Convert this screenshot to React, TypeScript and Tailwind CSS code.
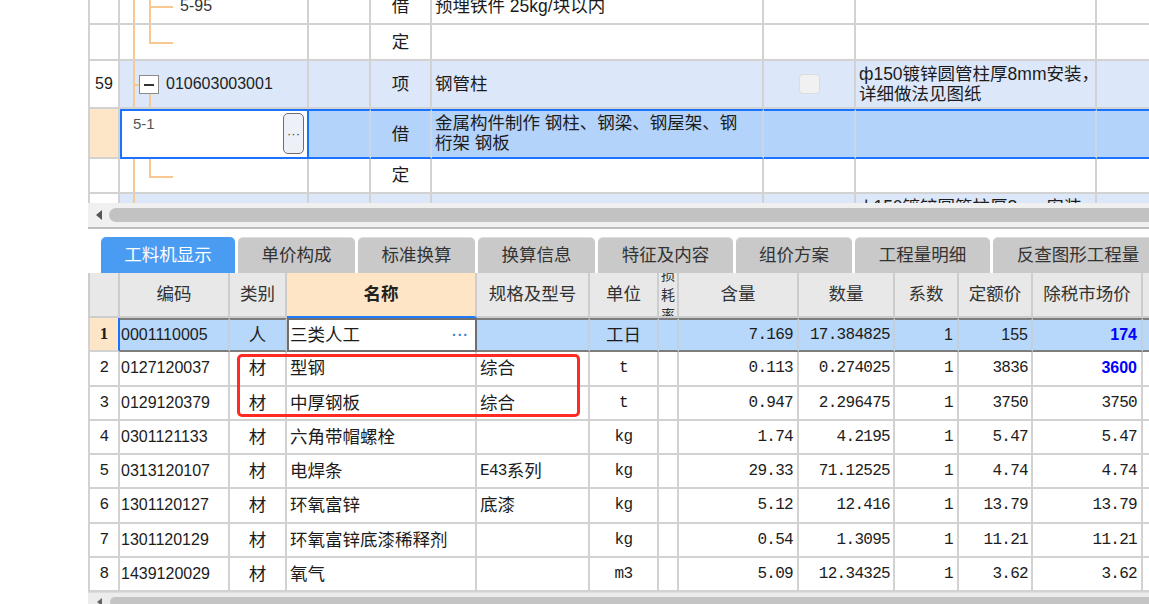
import React from 'react';

// 字体：拉丁字符用 Liberation，中文回落到 Noto CJK
const SANS = "font-['Liberation_Sans','Noto_Sans_CJK_SC',sans-serif]";
const MONO = "font-['Liberation_Mono','Noto_Sans_CJK_SC',monospace]";
const NUM = `text-[16px] tracking-[-0.7px] ${MONO}`;

const line = 'border-[#d2d2d2]';
const treeLine = 'bg-[#f8c890]';

type TopRowData = {
  h: string;
  rn?: string;
  tree: 'child' | 'last' | 'parent' | 'editor' | 'plain';
  code?: string;
  type?: string;
  desc?: React.ReactNode;
  feat?: React.ReactNode;
  check?: boolean;
  tone: 'white' | 'item' | 'selected';
};

const topRows: TopRowData[] = [
  { h: 'h-[36px]', tree: 'child', code: '5-95', type: '借', desc: '预埋铁件 25kg/块以内', tone: 'white' },
  { h: 'h-[36px]', tree: 'last', type: '定', tone: 'white' },
  {
    h: 'h-[48px]',
    rn: '59',
    tree: 'parent',
    code: '010603003001',
    type: '项',
    desc: '钢管柱',
    check: true,
    feat: (
      <>
        ф150镀锌圆管柱厚8mm安装，
        <br />
        详细做法见图纸
      </>
    ),
    tone: 'item',
  },
  {
    h: 'h-[50px]',
    tree: 'editor',
    code: '5-1',
    type: '借',
    desc: (
      <>
        金属构件制作 钢柱、钢梁、钢屋架、钢
        <br />
        桁架 钢板
      </>
    ),
    tone: 'selected',
  },
  { h: 'h-[35px]', tree: 'last', type: '定', tone: 'white' },
  {
    h: 'h-[48px]',
    rn: '60',
    tree: 'plain',
    type: '项',
    desc: '钢管柱',
    feat: (
      <>
        ф150镀锌圆管柱厚8mm安装，
        <br />
        详细做法见图纸
      </>
    ),
    tone: 'item',
  },
];

/**
 * 树形列：橙色连接线 + 折叠按钮 / 编辑框
 */
function TreeCell({ r }: { r: TopRowData }) {
  if (r.tree === 'editor') {
    return (
      <div className="relative w-[189px] shrink-0 border-2 border-[#1a72ff] bg-white">
        <span className="absolute left-[11px] top-[2px] text-[15px] text-[#555]">{r.code}</span>
        <span className="absolute left-[161px] top-[2px] flex h-[41px] w-[21px] items-center justify-center rounded-[5px] border-[1.5px] border-[#6e6e6e] bg-[#edf1f7] text-[13px] leading-none text-[#444]">
          ···
        </span>
      </div>
    );
  }
  const bg = r.tone === 'item' ? 'bg-[#dce8fa]' : 'bg-white';
  return (
    <div className={`relative w-[189px] shrink-0 border-r-2 border-b-2 ${line} ${bg}`}>
      <span className={`absolute left-[13px] top-0 bottom-0 w-[2px] ${treeLine}`} />
      {r.tree === 'child' && (
        <>
          <span className={`absolute left-[29px] top-0 bottom-0 w-[2px] ${treeLine}`} />
          <span className={`absolute left-[29px] top-1/2 h-[2px] w-[24px] ${treeLine}`} />
          <span className="absolute left-[60px] top-1/2 -translate-y-1/2 text-[16px] text-[#333]">{r.code}</span>
        </>
      )}
      {r.tree === 'last' && (
        <>
          <span className={`absolute left-[29px] top-0 h-1/2 w-[2px] ${treeLine}`} />
          <span className={`absolute left-[29px] top-1/2 h-[2px] w-[24px] ${treeLine}`} />
        </>
      )}
      {r.tree === 'parent' && (
        <>
          <span className={`absolute left-[13px] top-[23px] h-[2px] w-[7px] ${treeLine}`} />
          <span className={`absolute left-[29px] top-[33px] bottom-0 w-[2px] ${treeLine}`} />
          <span className="absolute left-[19px] top-[14px] flex h-[19px] w-[20px] items-center justify-center border border-[#8c8c8c] bg-white">
            <span className="h-[2px] w-[10px] bg-[#333]" />
          </span>
          <span className="absolute left-[46px] top-1/2 -translate-y-1/2 text-[16px] text-[#222]">{r.code}</span>
        </>
      )}
    </div>
  );
}

function TopRow({ r }: { r: TopRowData }) {
  const sel = r.tone === 'selected';
  const bg = r.tone === 'item' ? 'bg-[#dce8fa]' : sel ? 'bg-[#b3d3fa]' : 'bg-white';
  const edge = sel
    ? 'border-r-2 border-r-[#c9d6e6] border-t-2 border-t-[#1a72ff] border-b-2 border-b-[#1a72ff]'
    : `border-r-2 border-b-2 ${line}`;
  return (
    <div className={`flex ${r.h}`}>
      <div
        className={`flex w-[32px] shrink-0 items-center justify-center border-l-2 border-r-2 border-b-2 ${line} ${
          sel ? 'bg-[#fde6c8]' : 'bg-white'
        } text-[16px] text-[#222]`}
      >
        {r.rn}
      </div>
      <TreeCell r={r} />
      <div className={`w-[62px] shrink-0 ${edge} ${bg}`} />
      <div className={`flex w-[61px] shrink-0 items-center justify-center ${edge} ${bg} text-[17.5px]`}>{r.type}</div>
      <div
        className={`flex w-[332px] shrink-0 ${sel ? 'items-start pt-[2px]' : 'items-center'} ${edge} ${bg} pl-[3px] text-[17.5px] leading-[20px] whitespace-nowrap`}
      >
        <div>{r.desc}</div>
      </div>
      <div className={`flex w-[92px] shrink-0 items-center justify-center ${edge} ${bg}`}>
        {r.check && <span className="h-[20px] w-[21px] rounded-[4px] border border-[#dcdcdc] bg-[#f1f1f1]" />}
      </div>
      <div className={`flex w-[241px] shrink-0 items-center ${edge} ${bg} pl-[3px] text-[17.5px] leading-[20px] whitespace-nowrap`}>
        <div>{r.feat}</div>
      </div>
      <div className={`w-[80px] shrink-0 ${edge} ${bg}`} />
    </div>
  );
}

function TopGrid() {
  return (
    <div className="h-[203px] shrink-0 overflow-hidden">
      <div className="mt-[-11px]">
        {topRows.map((r, i) => (
          <TopRow key={i} r={r} />
        ))}
      </div>
    </div>
  );
}

function ScrollStrip() {
  return (
    <div className="flex h-[24px] shrink-0 items-center bg-[#f0f0f0]">
      <svg className="ml-[8px] h-[10px] w-[6px]" viewBox="0 0 6 10">
        <path d="M6 0 L0 5 L6 10 Z" fill="#555" />
      </svg>
      <div className="ml-[7px] h-[14px] flex-1 rounded-l-full bg-[#c2c2c2]" />
    </div>
  );
}

const tabs = [
  { label: '工料机显示', w: 'w-[134px]', active: true },
  { label: '单价构成', w: 'w-[117px]' },
  { label: '标准换算', w: 'w-[117px]' },
  { label: '换算信息', w: 'w-[117px]' },
  { label: '特征及内容', w: 'w-[135px]' },
  { label: '组价方案', w: 'w-[116px]' },
  { label: '工程量明细', w: 'w-[135px]' },
  { label: '反查图形工程量', w: 'w-[170px]' },
];

function Tabs() {
  return (
    <div className="flex h-[36px] shrink-0 gap-[3px] pl-[13px]">
      {tabs.map((t) => (
        <div
          key={t.label}
          className={`flex ${t.w} shrink-0 items-center justify-center rounded-t-[5px] text-[17.5px] ${
            t.active ? 'bg-[#4a9cf2] text-white' : 'border-t border-[#dedede] bg-[#c9c9c9] text-[#333]'
          }`}
        >
          {t.label}
        </div>
      ))}
    </div>
  );
}

type Mat = {
  code: string;
  type: string;
  name: string;
  spec: string;
  unit: string;
  qty: string;
  amount: string;
  price: string;
  market: string;
  marketBlue?: boolean;
};

const mats: Mat[] = [
  { code: '0127120037', type: '材', name: '型钢', spec: '综合', unit: 't', qty: '0.113', amount: '0.274025', price: '3836', market: '3600', marketBlue: true },
  { code: '0129120379', type: '材', name: '中厚钢板', spec: '综合', unit: 't', qty: '0.947', amount: '2.296475', price: '3750', market: '3750' },
  { code: '0301121133', type: '材', name: '六角带帽螺栓', spec: '', unit: 'kg', qty: '1.74', amount: '4.2195', price: '5.47', market: '5.47' },
  { code: '0313120107', type: '材', name: '电焊条', spec: 'E43系列', unit: 'kg', qty: '29.33', amount: '71.12525', price: '4.74', market: '4.74' },
  { code: '1301120127', type: '材', name: '环氧富锌', spec: '底漆', unit: 'kg', qty: '5.12', amount: '12.416', price: '13.79', market: '13.79' },
  { code: '1301120129', type: '材', name: '环氧富锌底漆稀释剂', spec: '', unit: 'kg', qty: '0.54', amount: '1.3095', price: '11.21', market: '11.21' },
  { code: '1439120029', type: '材', name: '氧气', spec: '', unit: 'm3', qty: '5.09', amount: '12.34325', price: '3.62', market: '3.62' },
];

const hc = `flex shrink-0 items-center justify-center border-r-2 border-b-2 border-[#cdcdcd] bg-[#e8e8e8] text-[17.5px] text-[#333]`;

function Header() {
  return (
    <div className="flex h-[45px] shrink-0">
      <div className={`${hc} w-[32px] border-l-2`} />
      <div className={`${hc} w-[110px]`}>编码</div>
      <div className={`${hc} w-[57px]`}>类别</div>
      <div className="flex w-[190px] shrink-0 items-center justify-center border-r-2 border-r-[#cdcdcd] border-b-2 border-b-[#1f7bff] bg-[#fde5c6] text-[17.5px] font-bold text-[#222]">
        名称
      </div>
      <div className={`${hc} w-[113px]`}>规格及型号</div>
      <div className={`${hc} w-[69px]`}>单位</div>
      <div className={`${hc} w-[20px] overflow-hidden`}>
        <div className="flex h-[43px] flex-col items-center justify-center overflow-hidden text-[14px] leading-[20px]">
          <span className="shrink-0">损</span>
          <span className="shrink-0">耗</span>
          <span className="shrink-0">率</span>
        </div>
      </div>
      <div className={`${hc} w-[120px]`}>含量</div>
      <div className={`${hc} w-[96px]`}>数量</div>
      <div className={`${hc} w-[64px]`}>系数</div>
      <div className={`${hc} w-[74px]`}>定额价</div>
      <div className={`${hc} w-[110px]`}>除税市场价</div>
      <div className={`${hc} w-[60px]`} />
    </div>
  );
}

const r1 = 'shrink-0 border-t-2 border-b-2 border-r-2 border-t-[#7d7d7d] border-b-[#7d7d7d] border-r-[#c4cfdc] bg-[#b7d7fb] flex items-center';

function FirstRow() {
  return (
    <div className="flex h-[34.25px] shrink-0">
      <div className="flex w-[32px] shrink-0 items-center justify-center border-l-2 border-b-2 border-r-2 border-l-[#d2d2d2] border-b-[#d2d2d2] border-r-[#1a72ff] bg-[#fde6c8] font-['Liberation_Serif',serif] text-[17px] font-bold">
        1
      </div>
      <div className={`${r1} w-[110px] pl-[1px] text-[16px]`}>0001110005</div>
      <div className={`${r1} w-[57px] justify-center text-[17.5px]`}>人</div>
      <div className="flex w-[190px] shrink-0 items-center justify-between border-2 border-[#6f6f6f] bg-white pl-[1px] pr-[6px] text-[17.5px]">
        <span>三类人工</span>
        <span className="text-[14px] font-bold tracking-[1px] text-[#3b7fd6]">···</span>
      </div>
      <div className={`${r1} w-[113px]`} />
      <div className={`${r1} w-[69px] justify-center text-[17.5px]`}>工日</div>
      <div className={`${r1} w-[20px]`} />
      <div className={`${r1} w-[120px] justify-end pr-[4px] ${NUM}`}>7.169</div>
      <div className={`${r1} w-[96px] justify-end pr-[3px] ${NUM}`}>17.384825</div>
      <div className={`${r1} w-[64px] justify-end pr-[4px] text-[16px]`}>1</div>
      <div className={`${r1} w-[74px] justify-end pr-[3px] text-[16px]`}>155</div>
      <div className={`${r1} w-[110px] justify-end pr-[4px] text-[16px] font-bold text-[#0000ff]`}>174</div>
      <div className={`${r1} w-[60px]`} />
    </div>
  );
}

const dc = `flex shrink-0 items-center border-r-2 border-b-2 ${line} bg-white`;

function MatRow({ m, n }: { m: Mat; n: number }) {
  return (
    <div className="flex h-[34.25px] shrink-0">
      <div className={`${dc} w-[32px] justify-center border-l-2 ${NUM}`}>{n}</div>
      <div className={`${dc} w-[110px] pl-[1px] text-[16px]`}>{m.code}</div>
      <div className={`${dc} w-[57px] justify-center text-[17.5px]`}>{m.type}</div>
      <div className={`${dc} w-[190px] pl-[3px] text-[17.5px] whitespace-nowrap`}>{m.name}</div>
      <div className={`${dc} w-[113px] pl-[3px] text-[17.5px] whitespace-nowrap`}>
        {m.spec === 'E43系列' ? (
          <>
            <span className={NUM}>E43</span>系列
          </>
        ) : (
          m.spec
        )}
      </div>
      <div className={`${dc} w-[69px] justify-center ${NUM}`}>{m.unit}</div>
      <div className={`${dc} w-[20px]`} />
      <div className={`${dc} w-[120px] justify-end pr-[4px] ${NUM}`}>{m.qty}</div>
      <div className={`${dc} w-[96px] justify-end pr-[3px] ${NUM}`}>{m.amount}</div>
      <div className={`${dc} w-[64px] justify-end pr-[4px] ${NUM}`}>1</div>
      <div className={`${dc} w-[74px] justify-end pr-[3px] ${NUM}`}>{m.price}</div>
      <div
        className={`${dc} w-[110px] justify-end pr-[4px] ${
          m.marketBlue ? 'text-[16px] font-bold text-[#0000ff]' : NUM
        }`}
      >
        {m.market}
      </div>
      <div className={`${dc} w-[60px]`} />
    </div>
  );
}

function BottomScroll() {
  return (
    <div className="flex h-[12px] shrink-0 items-start border-t border-[#dcdcdc] bg-[#ececec] pt-[4px]">
      <svg className="ml-[9px] mt-[1px] h-[8px] w-[5px]" viewBox="0 0 5 8">
        <path d="M5 0 L0 4 L5 8 Z" fill="#666" />
      </svg>
      <div className="ml-[8px] h-[10px] flex-1 rounded-l-full bg-[#c4c4c4]" />
    </div>
  );
}

export default function App() {
  return (
    <div className={`relative flex h-[604px] w-[1149px] overflow-hidden bg-white text-[#1c1c1c] ${SANS}`}>
      <div className="w-[88px] shrink-0" />
      <div className="flex w-[1061px] shrink-0 flex-col overflow-hidden">
        <TopGrid />
        <ScrollStrip />
        <div className="h-[2px] shrink-0 bg-[#bdbdbd]" />
        <div className="h-[8px] shrink-0" />
        <Tabs />
        <Header />
        <FirstRow />
        {mats.map((m, i) => (
          <MatRow key={m.code} m={m} n={i + 2} />
        ))}
        <BottomScroll />
      </div>
      {/* 红框标注 */}
      <div className="pointer-events-none absolute left-[237px] top-[354px] h-[63px] w-[343px] rounded-[5px] border-[3px] border-[#ff2b22]" />
    </div>
  );
}
